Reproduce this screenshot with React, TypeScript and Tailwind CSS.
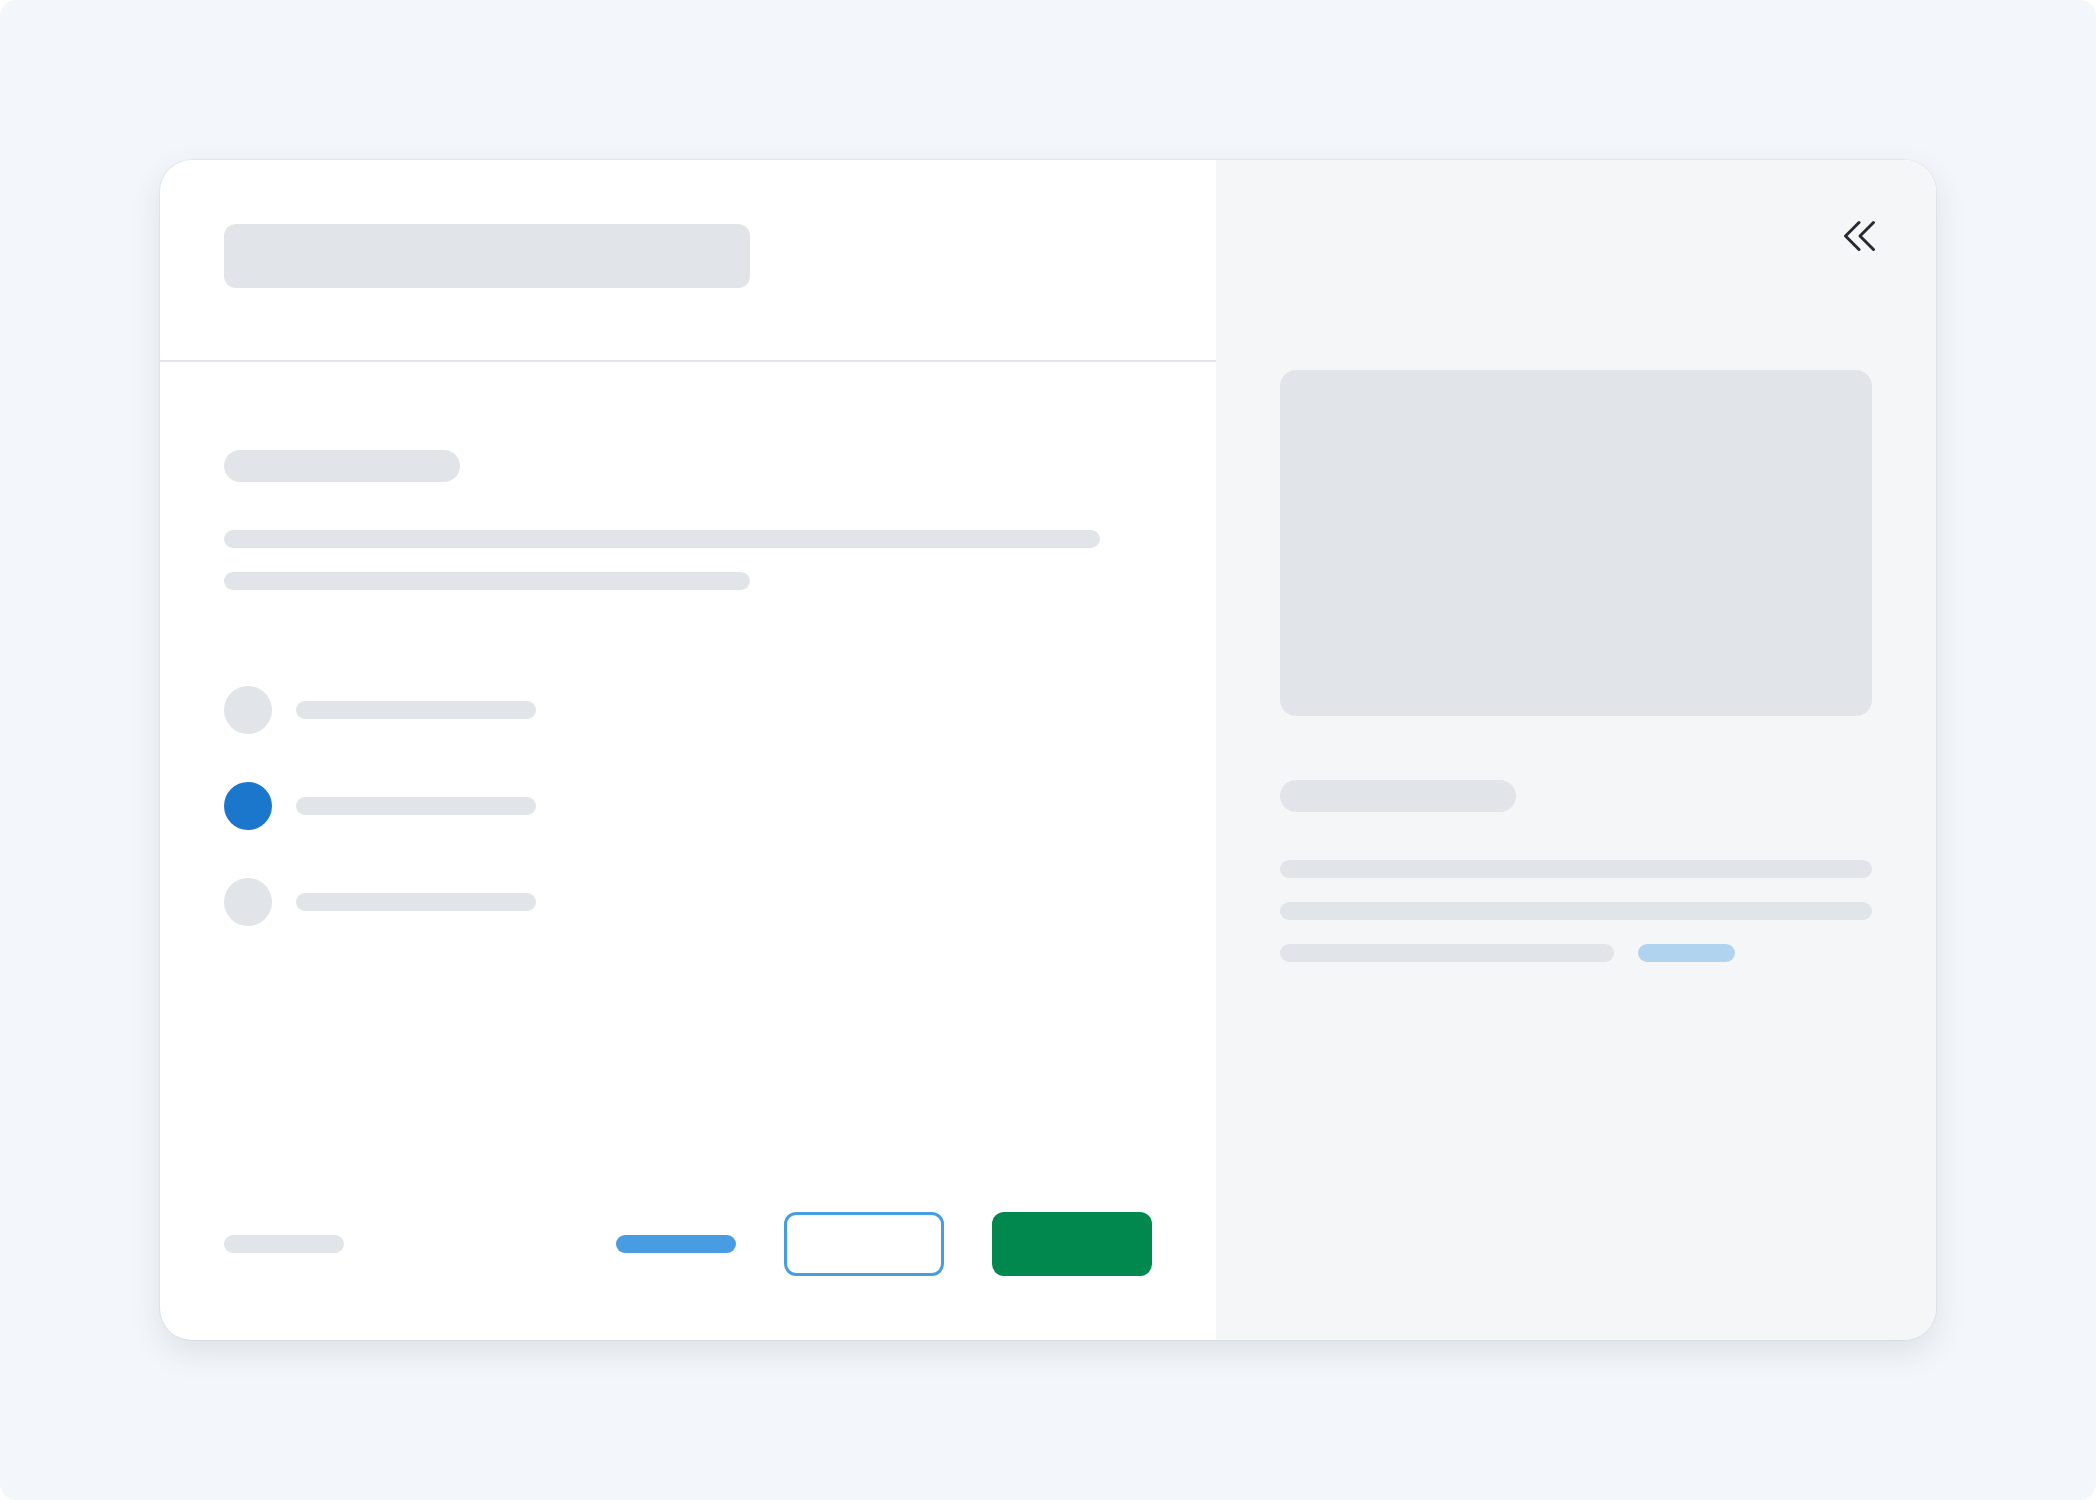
import React from "react";

const Bar = ({ className }: { className: string }) => <div className={`rounded-full bg-[#e1e4e8] ${className}`} />;

const RadioRow = ({ selected }: { selected?: boolean }) => (
  <div className="flex items-center gap-6">
    <div className={`h-12 w-12 rounded-full ${selected ? "bg-[#1b77cc]" : "bg-[#e1e4e8]"}`} />
    <Bar className="h-[18px] w-[240px]" />
  </div>
);

const CollapseIcon = () => (
  <svg width="32" height="32" viewBox="0 0 32 32" fill="none" stroke="#262a31" strokeWidth="3" strokeLinecap="round" strokeLinejoin="round">
    <path d="M15 2.5 1.5 16 15 29.5" />
    <path d="M29.5 2.5 16 16 29.5 29.5" />
  </svg>
);

const App: React.FC = () => {
  return (
    <div className="h-[1500px] w-[2096px] bg-white">
      <div className="h-full rounded-2xl bg-[#f3f7fb] p-40">
        <div className="flex h-full overflow-hidden rounded-[32px] bg-white shadow-[0_12px_32px_rgba(30,41,59,0.10),0_0_0_1px_rgba(226,232,240,0.7)]">
          {/* left form */}
          <div className="flex w-[1056px] flex-col">
            <div className="h-[202px] border-b-2 border-[#e3e6ea] px-16 pt-16">
              <div className="h-16 w-[526px] rounded-xl bg-[#e1e4e8]" />
            </div>
            <div className="flex flex-1 flex-col px-16 pt-[88px] pb-16">
              <Bar className="h-8 w-[236px]" />
              <Bar className="mt-12 h-[18px] w-[876px]" />
              <Bar className="mt-6 h-[18px] w-[526px]" />
              <div className="mt-24 flex flex-col gap-12">
                <RadioRow />
                <RadioRow selected />
                <RadioRow />
              </div>
              <div className="mt-auto flex items-center">
                <Bar className="h-[18px] w-[120px]" />
                <div className="ml-auto flex items-center gap-12">
                  <div className="h-[18px] w-[120px] rounded-full bg-[#489ce2]" />
                  <div className="h-16 w-[160px] rounded-xl border-[3px] border-[#489ce2] bg-white" />
                  <div className="h-16 w-[160px] rounded-xl bg-[#00884f]" />
                </div>
              </div>
            </div>
          </div>

          {/* right preview */}
          <div className="flex flex-1 flex-col bg-[#f5f6f8] px-16 pt-[60px]">
            <div className="-mr-1 flex justify-end">
              <CollapseIcon />
            </div>
            <div className="mt-[118px] h-[346px] w-full rounded-2xl bg-[#e1e4e8]" />
            <Bar className="mt-16 h-8 w-[236px]" />
            <div className="mt-12 flex flex-col gap-6">
              <Bar className="h-[18px] w-full" />
              <Bar className="h-[18px] w-full" />
              <div className="flex items-center gap-6">
                <Bar className="h-[18px] w-[334px]" />
                <div className="h-[18px] w-[97px] rounded-full bg-[#b0d4ef]" />
              </div>
            </div>
          </div>
        </div>
      </div>
    </div>
  );
};

export default App;
